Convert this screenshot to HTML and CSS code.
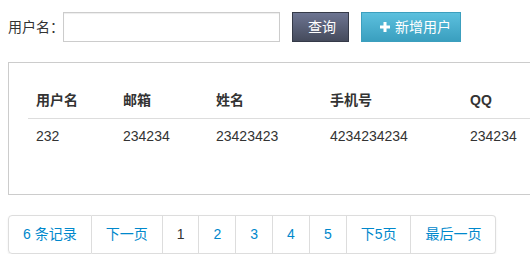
FILE: index.html
```html
<!DOCTYPE html>
<html lang="zh-CN">
<head>
    <meta charset="UTF-8">
    <title>用户管理</title>
    <link rel="stylesheet" href="styles.css">
</head>
<body>

    <div class="search-bar">
        <label for="username">用户名：</label>
        <input type="text" id="username" name="username">
        <button class="btn btn-query">查询</button>
        <button class="btn btn-add">
            <svg class="icon-plus" width="10" height="10" viewBox="0 0 10 10">
                <path d="M3.5 0h3v3.5h3.5v3h-3.5v3.5h-3v-3.5h-3.5v-3h3.5z" fill="#fff"/>
            </svg>新增用户</button>
    </div>

    <div class="panel">
        <table class="user-table">
            <thead>
                <tr>
                    <th class="col-name">用户名</th>
                    <th class="col-mail">邮箱</th>
                    <th class="col-real">姓名</th>
                    <th class="col-phone">手机号</th>
                    <th>QQ</th>
                </tr>
            </thead>
            <tbody>
                <tr>
                    <td>232</td>
                    <td>234234</td>
                    <td>23423423</td>
                    <td>4234234234</td>
                    <td>234234</td>
                </tr>
            </tbody>
        </table>
    </div>

    <ul class="pagination">
        <li><a href="#">6 条记录</a></li>
        <li><a href="#">下一页</a></li>
        <li class="active"><a href="#">1</a></li>
        <li><a href="#">2</a></li>
        <li><a href="#">3</a></li>
        <li><a href="#">4</a></li>
        <li><a href="#">5</a></li>
        <li><a href="#">下5页</a></li>
        <li><a href="#">最后一页</a></li>
    </ul>

</body>
</html>
```

FILE: styles.css
```css
html, body {
    overflow: hidden;
}
body {
    margin: 0;
    padding: 12px 8px 0 8px;
    font-family: "Liberation Sans", "Noto Sans CJK SC", sans-serif;
    font-size: 14px;
    line-height: 20px;
    color: #333;
    background-color: #fff;
}

/* search row */
.search-bar {
    display: flex;
    align-items: center;
    height: 30px;
    white-space: nowrap;
}
.search-bar label {
    flex-shrink: 0;
    width: 55px;
}
.search-bar input[type="text"] {
    box-sizing: border-box;
    flex-shrink: 0;
    width: 217px;
    height: 30px;
    margin: 0 12px 0 0;
    padding: 4px 6px;
    border: 1px solid #ccc;
    border-radius: 0;
    box-shadow: inset 0 1px 1px rgba(0,0,0,0.075);
    font: inherit;
}
.btn {
    box-sizing: border-box;
    flex-shrink: 0;
    height: 30px;
    margin-right: 12px;
    padding: 0 0 0 15px;
    border: 1px solid;
    font: inherit;
    color: #fff;
    display: flex;
    align-items: center;
    white-space: nowrap;
    cursor: pointer;
}
.btn-query {
    width: 57px;
    background: linear-gradient(#6d7592, #454b5c);
    border-color: #353a48;
}
.btn-add {
    width: 100px;
    padding-left: 18px;
    background: linear-gradient(#5cc0de, #3a9fbf);
    border-color: #3c9fbe;
}
.icon-plus {
    flex-shrink: 0;
    margin-right: 5px;
}

/* table panel */
.panel {
    width: 560px;
    margin-top: 20px;
    padding: 20px 19px;
    border: 1px solid #ccc;
}
.user-table {
    width: 100%;
    margin-bottom: 20px;
    border-collapse: collapse;
}
.user-table th,
.user-table td {
    padding: 8px;
    line-height: 19px;
    text-align: left;
}
.user-table th {
    font-weight: bold;
    border-bottom: 1px solid #ddd;
}
.col-name { width: 71px; }
.col-mail { width: 77px; }
.col-real { width: 98px; }
.col-phone { width: 124px; }

/* pagination */
.pagination {
    display: inline-flex;
    margin: 20px 0 0 0;
    padding: 0;
    list-style: none;
    border-radius: 4px;
    box-shadow: 0 1px 2px rgba(0,0,0,0.08);
}
.pagination li a {
    display: block;
    padding: 9px 14px;
    line-height: 19px;
    border: 1px solid #ddd;
    border-left-width: 0;
    color: #0088cc;
    text-decoration: none;
    background: #fff;
}
.pagination li:first-child a {
    border-left-width: 1px;
    border-radius: 4px 0 0 4px;
}
.pagination li:last-child a {
    border-radius: 0 4px 4px 0;
}
.pagination li.active a {
    color: #333;
}
```
